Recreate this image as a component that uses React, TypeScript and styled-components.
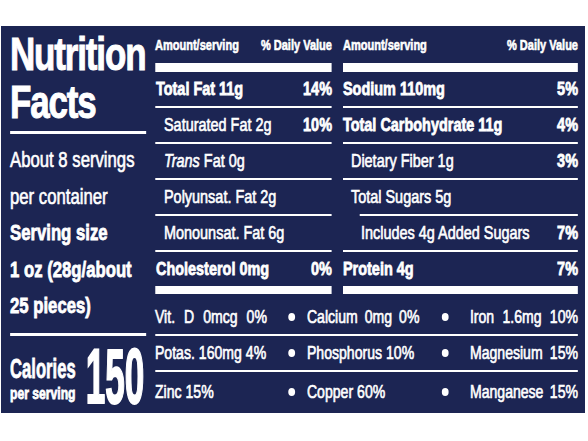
import React from 'react';
import styled, { createGlobalStyle } from 'styled-components';

// no condensed face is installed, so the whole label is laid out wide and squeezed
const K = 0.76;
const x = (px: number) => `${(px / K).toFixed(2)}px`;

const NAVY = '#1c2553';
const FONT = `"Liberation Sans", Arial, sans-serif`;
const HEAVY = 0.8;
const MEDIUM = 0.65;

const GlobalStyle = createGlobalStyle`
  html, body {
    margin: 0;
    padding: 0;
    background: #fff;
    overflow: hidden;
  }
  body {
    font-family: ${FONT};
    color: #fff;
  }
`;

const Frame = styled.div`
  margin: 26px 0 0 1px;
  width: 584px;
  height: 387px;
  background: ${NAVY};
`;

const Panel = styled.div`
  width: ${x(584)};
  height: 387px;
  transform: scaleX(${K});
  transform-origin: 0 0;
  display: grid;
  grid-template-columns: ${x(150)} 1fr;
`;

const Side = styled.div`
  padding: 0 ${x(5)} 0 ${x(9)};
  display: flex;
  flex-direction: column;
  min-width: 0;
`;

const Title = styled.h1`
  margin: 0;
  padding-top: 4px;
  font-size: 46px;
  line-height: 48px;
  font-weight: 700;
  letter-spacing: -1.5px;
  -webkit-text-stroke: 1px #fff;
`;

const SideRule = styled.div<{ $top: number; $bottom: number }>`
  height: 3px;
  background: #fff;
  margin: ${({ $top, $bottom }) => `${$top}px 0 ${$bottom}px`};
`;

const ServLine = styled.div<{ $heavy?: boolean }>`
  font-size: 22px;
  line-height: 36.5px;
  white-space: nowrap;
  font-weight: ${({ $heavy }) => ($heavy ? 700 : 400)};
  -webkit-text-stroke: ${({ $heavy }) => ($heavy ? HEAVY : MEDIUM)}px #fff;
`;

const CalBlock = styled.div`
  display: flex;
  align-items: flex-start;
  justify-content: space-between;
  padding-top: 2px;
`;

const CalLabel = styled.div`
  margin-top: 17px;
  display: flex;
  flex-direction: column;
  align-items: flex-start;
  font-weight: 700;
  -webkit-text-stroke: ${HEAVY}px #fff;
  white-space: nowrap;
`;

// extra squeeze for the tighter display type; the negative margin gives back the
// width the transform takes away, so the layout box matches what is drawn
const Squeeze = styled.span<{ $k: number; $origin: 'left' | 'right'; $give: number }>`
  display: inline-block;
  transform: scaleX(${({ $k }) => $k});
  transform-origin: ${({ $origin }) => $origin} center;
  ${({ $origin, $give }) => ($origin === 'left' ? `margin-right: -${$give}px;` : `margin-left: -${$give}px;`)}
`;

const CalWord = styled(Squeeze)`
  font-size: 28px;
  line-height: 28px;
`;

const PerServing = styled.span`
  margin-top: 1px;
  font-size: 16px;
  line-height: 20px;
`;

const CalValue = styled.div`
  flex: none;
  padding-right: ${x(2)};
  display: flex;
  font-size: 77px;
  line-height: 77px;
  font-weight: 700;
  -webkit-text-stroke: 2px #fff;
  white-space: nowrap;
`;

const Table = styled.div`
  display: flex;
  flex-direction: column;
  padding: 0 ${x(7)} 0 ${x(4)};
`;

const Columns = styled.div`
  display: grid;
  grid-template-columns: ${x(177)} 1fr;
  column-gap: ${x(11)};
`;

const Column = styled.div`
  display: flex;
  flex-direction: column;
`;

const Header = styled.div`
  height: 37px;
  display: flex;
  align-items: center;
  justify-content: space-between;
  font-size: 14.5px;
  font-weight: 700;
  white-space: nowrap;
  -webkit-text-stroke: 0.6px #fff;
`;

const ThickBar = styled.div<{ $h: number }>`
  height: ${({ $h }) => $h}px;
  background: #fff;
`;

const Row = styled.div<{ $indent: number; $heavy?: boolean; $lineFrom?: number; $last?: boolean }>`
  height: 34px;
  display: flex;
  align-items: center;
  justify-content: space-between;
  padding-left: ${({ $indent }) => x($indent)};
  font-size: 19px;
  white-space: nowrap;
  font-weight: ${({ $heavy }) => ($heavy ? 700 : 400)};
  -webkit-text-stroke: ${({ $heavy }) => ($heavy ? HEAVY : MEDIUM)}px #fff;
  position: relative;
  margin-bottom: ${({ $last }) => ($last ? 0 : 2)}px;

  &::after {
    content: '';
    display: ${({ $last }) => ($last ? 'none' : 'block')};
    position: absolute;
    left: ${({ $lineFrom }) => x($lineFrom ?? 0)};
    right: 0;
    bottom: -2px;
    height: 2px;
    background: #fff;
  }
`;

const Pct = styled.span`
  font-weight: 700;
  -webkit-text-stroke: ${HEAVY}px #fff;
`;

const Minerals = styled.div`
  display: flex;
  flex-direction: column;
`;

const MineralRow = styled.div<{ $h: number; $pt: number; $line?: boolean }>`
  height: ${({ $h }) => $h}px;
  padding-top: ${({ $pt }) => $pt}px;
  box-sizing: border-box;
  display: grid;
  grid-template-columns: ${x(122)} ${x(30)} ${x(123)} ${x(30)} 1fr;
  align-items: center;
  font-size: 18.5px;
  -webkit-text-stroke: ${MEDIUM}px #fff;
  border-bottom: ${({ $line }) => ($line ? '2px solid #fff' : 'none')};
`;

const Cell = styled.div<{ $gap?: number; $spread?: boolean; $pad?: number }>`
  display: flex;
  white-space: nowrap;
  gap: ${({ $gap }) => x($gap ?? 4)};
  justify-content: ${({ $spread }) => ($spread ? 'space-between' : 'flex-start')};
  padding-left: ${({ $pad }) => x($pad ?? 0)};
`;

const Dot = styled.span`
  justify-self: center;
  width: ${x(7)};
  height: 8px;
  border-radius: 50%;
  background: #fff;
`;

type Nutrient = {
  label: React.ReactNode;
  pct?: string;
  indent: number;
  heavy?: boolean;
  lineFrom?: number;
};

const leftRows: Nutrient[] = [
  { label: 'Total Fat 11g', pct: '14%', indent: 1, heavy: true },
  { label: 'Saturated Fat 2g', pct: '10%', indent: 9 },
  { label: <><i>Trans</i> Fat 0g</>, indent: 9 },
  { label: 'Polyunsat. Fat 2g', indent: 9 },
  { label: 'Monounsat. Fat 6g', indent: 9 },
  { label: 'Cholesterol 0mg', pct: '0%', indent: 1, heavy: true },
];

const rightRows: Nutrient[] = [
  { label: 'Sodium 110mg', pct: '5%', indent: 0, heavy: true },
  { label: 'Total Carbohydrate 11g', pct: '4%', indent: 0, heavy: true },
  { label: 'Dietary Fiber 1g', pct: '3%', indent: 8 },
  { label: 'Total Sugars 5g', indent: 8, lineFrom: 17 },
  { label: 'Includes 4g Added Sugars', pct: '7%', indent: 18 },
  { label: 'Protein 4g', pct: '7%', indent: 0, heavy: true },
];

type Mineral = { words: string[]; gap?: number; spread?: boolean };

const minerals: { h: number; pt: number; cells: Mineral[] }[] = [
  {
    h: 42,
    pt: 6,
    cells: [
      { words: ['Vit.', 'D', '0mcg', '0%'], gap: 9 },
      { words: ['Calcium', '0mg', '0%'], gap: 7 },
      { words: ['Iron', '1.6mg', '10%'], spread: true },
    ],
  },
  {
    h: 36,
    pt: 0,
    cells: [
      { words: ['Potas.', '160mg', '4%'] },
      { words: ['Phosphorus', '10%'] },
      { words: ['Magnesium', '15%'], spread: true },
    ],
  },
  {
    h: 39,
    pt: 0,
    cells: [
      { words: ['Zinc', '15%'] },
      { words: ['Copper', '60%'] },
      { words: ['Manganese', '15%'], spread: true },
    ],
  },
];

const NutrientColumn: React.FC<{ rows: Nutrient[] }> = ({ rows }) => (
  <Column>
    <Header>
      <span>Amount/serving</span>
      <span>% Daily Value</span>
    </Header>
    <ThickBar $h={9} />
    {rows.map((r, i) => (
      <Row key={i} $indent={r.indent} $heavy={r.heavy} $lineFrom={r.lineFrom} $last={i === rows.length - 1}>
        <span>{r.label}</span>
        {r.pct && <Pct>{r.pct}</Pct>}
      </Row>
    ))}
    <ThickBar $h={8} />
  </Column>
);

const MineralCell: React.FC<{ m: Mineral; pad?: number }> = ({ m, pad }) => (
  <Cell $gap={m.gap} $spread={m.spread} $pad={pad}>
    {m.words.map((w) => (
      <span key={w}>{w}</span>
    ))}
  </Cell>
);

const App: React.FC = () => {
  return (
    <>
      <GlobalStyle />
      <Frame>
        <Panel>
          <Side>
            <Title>
              Nutrition
              <br />
              Facts
            </Title>
            <SideRule $top={5} $bottom={8} />
            <ServLine>About 8 servings</ServLine>
            <ServLine>per container</ServLine>
            <ServLine $heavy>Serving size</ServLine>
            <ServLine $heavy>1 oz (28g/about</ServLine>
            <ServLine $heavy>25 pieces)</ServLine>
            <SideRule $top={8} $bottom={0} />
            <CalBlock>
              <CalLabel>
                <CalWord $k={0.78} $origin="left" $give={24}>
                  Calories
                </CalWord>
                <PerServing>per serving</PerServing>
              </CalLabel>
              <CalValue>
                <Squeeze $k={0.6} $origin="right" $give={51}>
                  150
                </Squeeze>
              </CalValue>
            </CalBlock>
          </Side>
          <Table>
            <Columns>
              <NutrientColumn rows={leftRows} />
              <NutrientColumn rows={rightRows} />
            </Columns>
            <Minerals>
              {minerals.map((m, i) => (
                <MineralRow key={i} $h={m.h} $pt={m.pt} $line={i < minerals.length - 1}>
                  <MineralCell m={m.cells[0]} />
                  <Dot />
                  <MineralCell m={m.cells[1]} />
                  <Dot />
                  <MineralCell m={m.cells[2]} pad={10} />
                </MineralRow>
              ))}
            </Minerals>
          </Table>
        </Panel>
      </Frame>
    </>
  );
};

export default App;
